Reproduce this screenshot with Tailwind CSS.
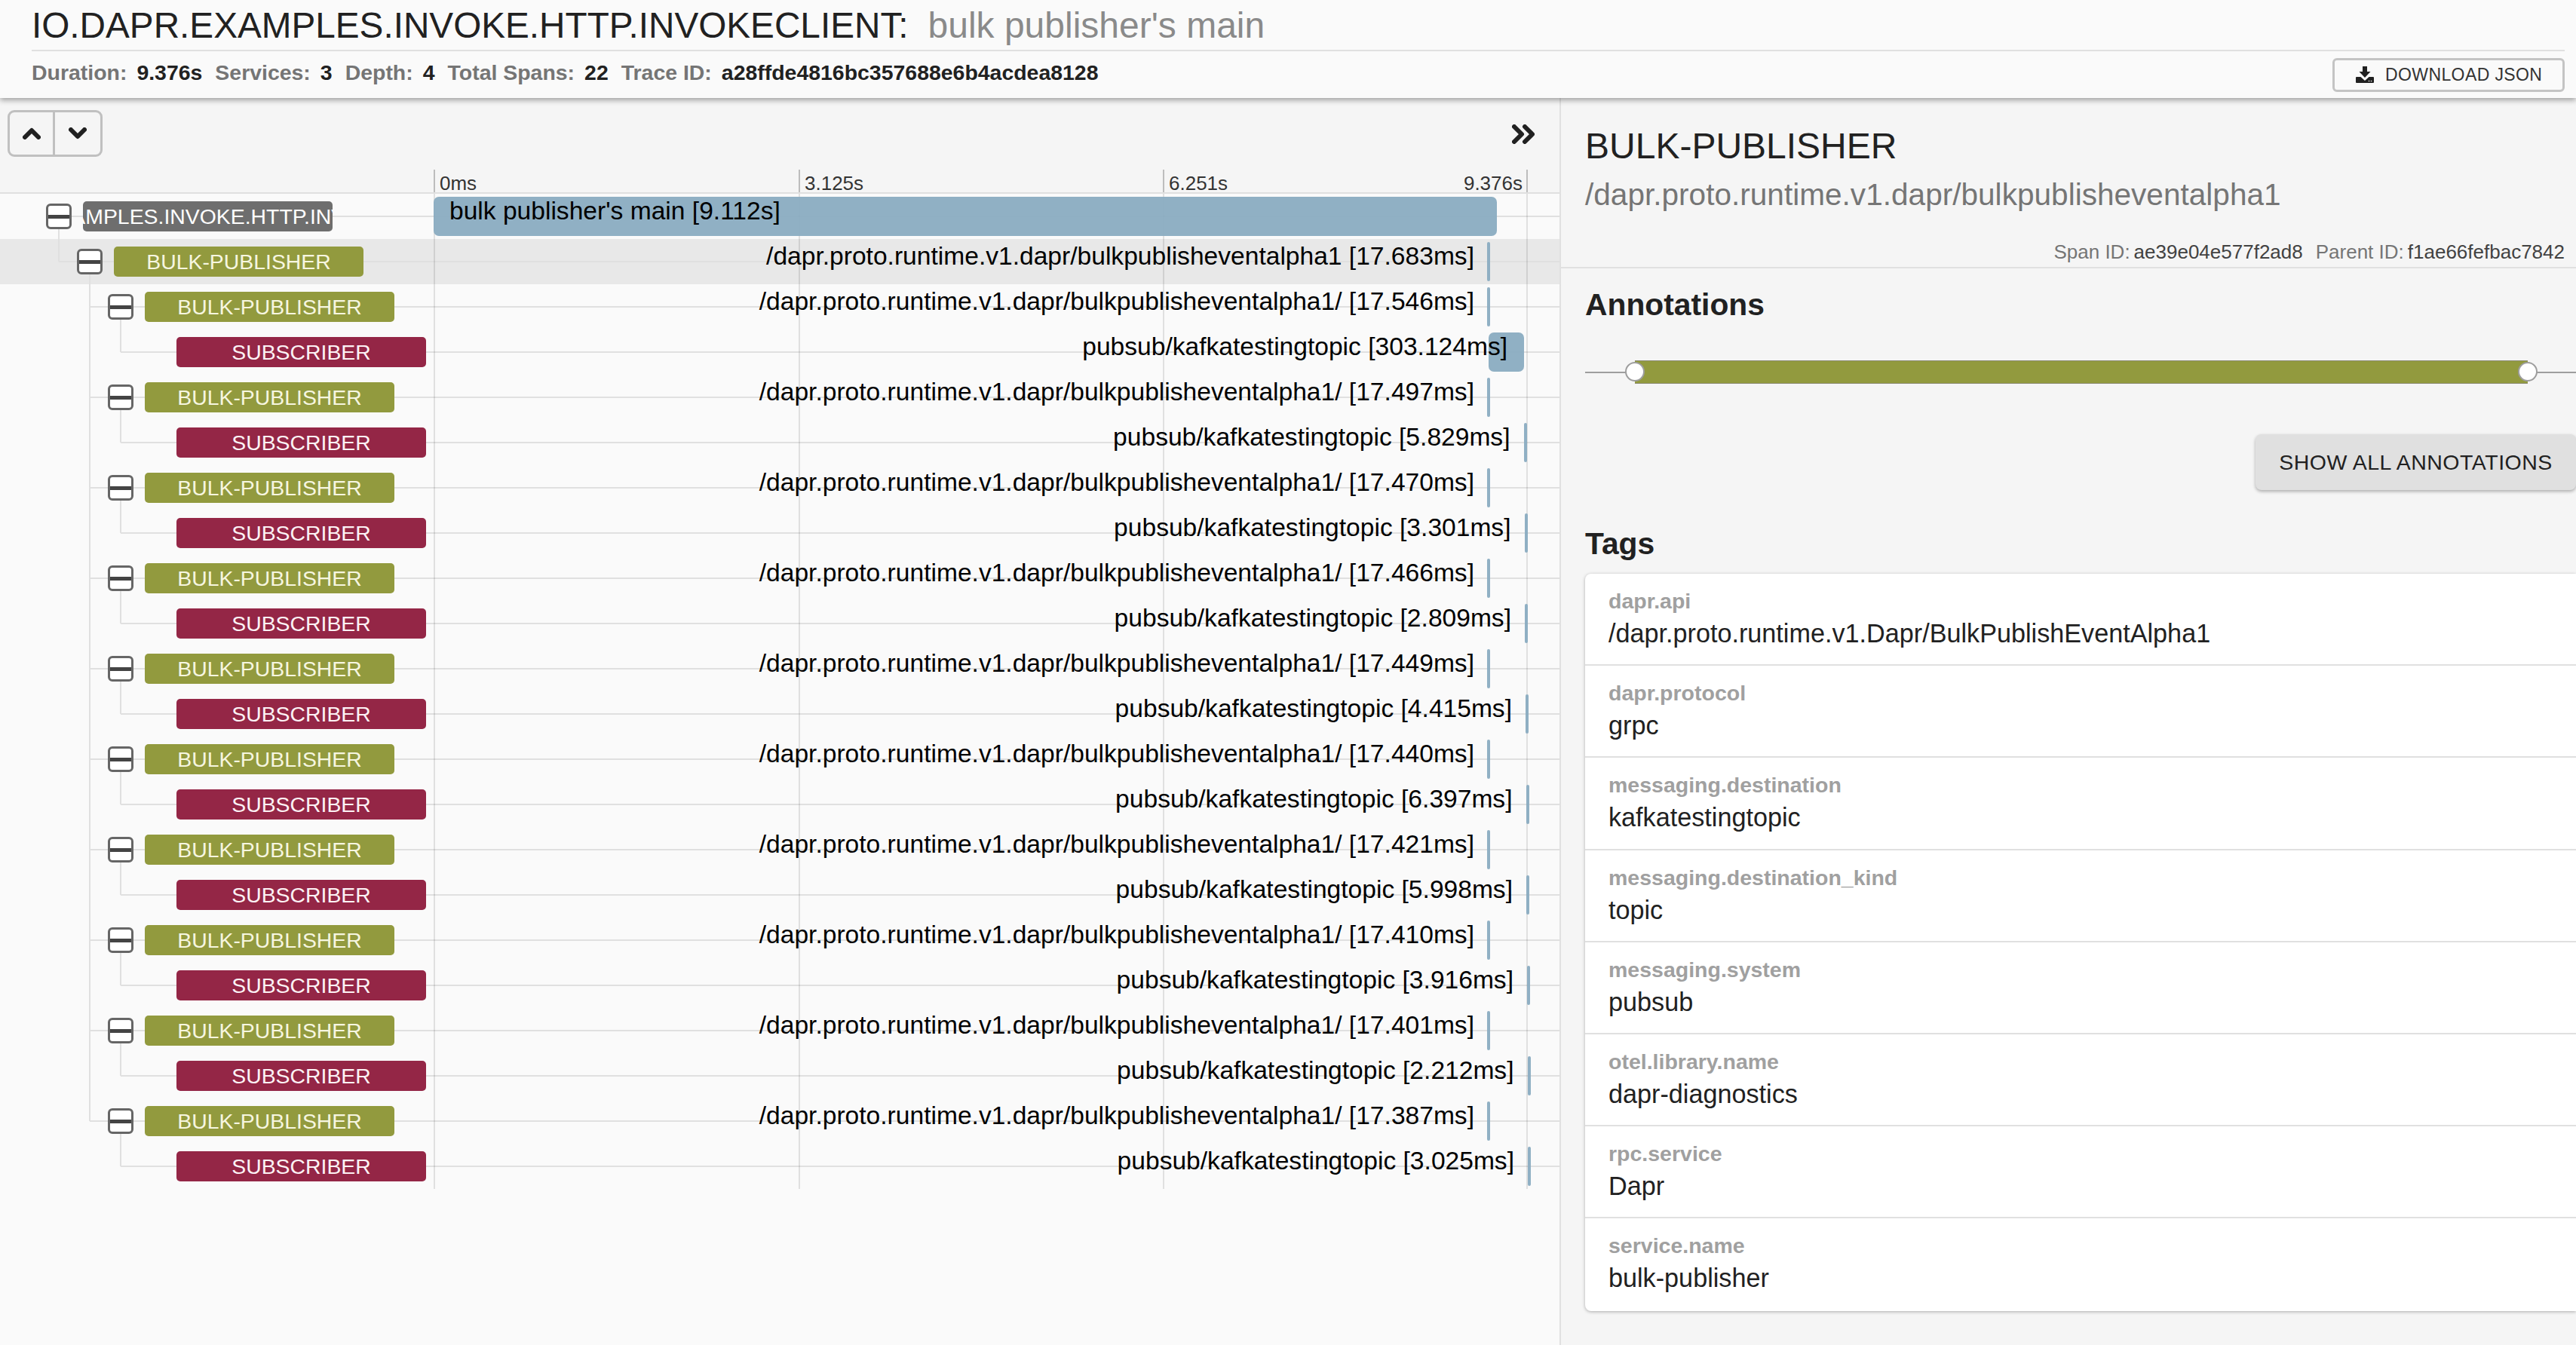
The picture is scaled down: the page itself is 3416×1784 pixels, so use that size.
<!DOCTYPE html>
<html lang="en">
<head>
    <meta charset="UTF-8">
    <meta name="viewport" content="width=device-width, initial-scale=1.0">
    <title>Trace detail</title>
    <script src="https://cdn.jsdelivr.net/npm/@tailwindcss/browser@4"></script>
</head>
<body class="bg-[#fafafa] font-['Liberation_Sans',Arial,sans-serif] text-black">
    <div class="w-[3416px] h-[1784px] flex flex-col overflow-hidden">
        <!-- header -->
        <header class="relative z-20 h-[130px] shrink-0 bg-[#fafafa] pl-[42px] pr-[15px] shadow-[0_3px_7px_rgba(0,0,0,0.35)]">
            <div class="h-[68px] border-b-2 border-[#e0e0e0] text-[47.700px] leading-[68px] whitespace-nowrap text-[#212121]">
                IO.DAPR.EXAMPLES.INVOKE.HTTP.INVOKECLIENT:<span class="text-[#8a8a8a] ml-[26px] text-[48px]">bulk publisher's main</span>
            </div>
            <div class="h-[62px] flex items-center justify-between">
                <div class="flex text-[28.450px] font-bold leading-[36px] pb-[6px] whitespace-nowrap">
                    <span class="text-[#757575]">Duration:</span><span class="ml-[13px] text-[#212121]">9.376s</span>
                    <span class="ml-[17px] text-[#757575]">Services:</span><span class="ml-[13px] text-[#212121]">3</span>
                    <span class="ml-[17px] text-[#757575]">Depth:</span><span class="ml-[13px] text-[#212121]">4</span>
                    <span class="ml-[17px] text-[#757575]">Total Spans:</span><span class="ml-[13px] text-[#212121]">22</span>
                    <span class="ml-[17px] text-[#757575]">Trace ID:</span><span class="ml-[13px] text-[#212121]">a28ffde4816bc357688e6b4acdea8128</span>
                </div>
                <button class="w-[308px] h-[45px] flex items-center border-[3px] border-[#c4c4c4] rounded-[6px] pl-[28px] text-[23px] tracking-[0.4px] text-[#333]">
                    <svg class="w-[24px] h-[22px] mr-[15px] shrink-0" viewBox="0 0 24 22" fill="#212121">
                        <path d="M9 0h6v7h4.500l-7.500 8-7.500-8H9z"/>
                        <path d="M1 14h5.500l5.500 5 5.500-5H23a1 1 0 0 1 1 1v6a1 1 0 0 1-1 1H1a1 1 0 0 1-1-1v-6a1 1 0 0 1 1-1z"/>
                        <circle cx="17.500" cy="19.500" r="0.800" fill="#fff"/>
                        <circle cx="20.500" cy="19.500" r="0.800" fill="#fff"/>
                    </svg>
                    DOWNLOAD JSON
                </button>
            </div>
        </header>

        <main class="flex flex-1 min-h-0">
            <!-- timeline -->
            <section class="w-[2070px] shrink-0 border-r-2 border-[#e0e0e0] flex flex-col">
                <div class="bg-[#f5f5f5]">
                    <div class="h-[95px] flex justify-between items-start pl-[10px] pr-[33px] pt-[16px]">
                        <div class="flex border-[3px] border-[#c0c0c0] rounded-[9px] h-[62px]">
                            <button class="w-[60px] flex items-center justify-center border-r-[3px] border-[#c0c0c0]">
                                <svg class="w-[24px] h-[16px]" viewBox="0 0 24 16" fill="none" stroke="#212121" stroke-width="6" stroke-linecap="round" stroke-linejoin="round"><path d="M3 13l9-9 9 9"/></svg>
                            </button>
                            <button class="w-[60px] flex items-center justify-center">
                                <svg class="w-[24px] h-[16px]" viewBox="0 0 24 16" fill="none" stroke="#212121" stroke-width="6" stroke-linecap="round" stroke-linejoin="round"><path d="M3 3l9 9 9-9"/></svg>
                            </button>
                        </div>
                        <svg class="w-[30px] h-[26px] mt-[19px]" viewBox="0 0 30 26" fill="none" stroke="#212121" stroke-width="6" stroke-linecap="round" stroke-linejoin="round"><path d="M3 3l10 10L3 23M17 3l10 10-10 10"/></svg>
                    </div>
                    <div class="h-[32px] pl-[575px] flex border-b-2 border-[#e0e0e0] text-[26px] leading-[36px] text-[#333]">
                        <div class="w-[484px] h-[30px] border-l-2 border-[#bdbdbd] pl-[6px]">0ms</div>
                        <div class="w-[483px] h-[30px] border-l-2 border-[#bdbdbd] pl-[6px]">3.125s</div>
                        <div class="w-[484px] h-[30px] border-r-2 border-l-2 border-[#bdbdbd] pl-[6px] pr-[5px] flex justify-between"><span>6.251s</span><span>9.376s</span></div>
                    </div>
                </div>
                <div id="rows" class="relative h-[1320px]"></div>
            </section>

            <!-- span detail -->
            <aside class="flex-1 min-w-0 bg-[#f5f5f5] flex flex-col">
                <div class="h-[226px] border-b-2 border-[#e0e0e0] pl-[32px] pr-[15px] pt-[36px] flex flex-col">
                    <h2 class="text-[48px] leading-[56px] text-[#212121]">BULK-PUBLISHER</h2>
                    <div class="mt-[12px] text-[40.600px] leading-[48px] text-[#757575] whitespace-nowrap">/dapr.proto.runtime.v1.dapr/bulkpublisheventalpha1</div>
                    <div class="mt-[36px] self-end flex text-[26px] leading-[32px] text-[#757575] whitespace-nowrap">
                        <span>Span ID:</span><span class="ml-[5px] text-[#424242]">ae39e04e577f2ad8</span>
                        <span class="ml-[17px]">Parent ID:</span><span class="ml-[5px] text-[#424242]">f1ae66fefbac7842</span>
                    </div>
                </div>
                <div class="flex flex-col pl-[32px]">
                    <h3 class="mt-[24px] text-[40.800px] font-bold leading-[48px] text-[#212121]">Annotations</h3>
                    <div class="mt-[50px] flex items-center h-[31px]">
                        <div class="w-[66px] h-[2px] bg-[#9e9e9e]"></div>
                        <div class="relative w-[1184px] h-[31px] bg-[#929a3e] border-y border-[#8a8a70]">
                            <span class="absolute left-[-13px] top-[1px] w-[26px] h-[26px] rounded-full bg-white border-2 border-[#9e9e9e]"></span>
                            <span class="absolute right-[-13px] top-[1px] w-[26px] h-[26px] rounded-full bg-white border-2 border-[#9e9e9e]"></span>
                        </div>
                        <div class="flex-1 h-[2px] bg-[#9e9e9e]"></div>
                    </div>
                    <button class="mt-[67px] self-end w-[425px] h-[74px] rounded-[8px] bg-[#e0e0e0] text-[28.500px] tracking-[0.5px] text-[#212121] shadow-[0_2px_4px_rgba(0,0,0,0.3)]">SHOW ALL ANNOTATIONS</button>
                    <h3 class="mt-[47px] text-[40.800px] font-bold leading-[48px] text-[#212121]">Tags</h3>
                    <div id="tags" class="mt-[16px] bg-white rounded-tl-[8px] rounded-bl-[8px] shadow-[0_1px_4px_rgba(0,0,0,0.3)]"></div>
                </div>
            </aside>
        </main>
    </div>

    <script>
        const ROW_H = 60;
        const depthPad = ['pl-[61px]', 'pl-[102px]', 'pl-[143px]', 'pl-[185px]'];
        const boxCenter = [78, 119, 160];
        const pillColor = {
            root: 'bg-[#6e6e6e]',
            bulk: 'bg-[#929a3e]',
            sub: 'bg-[#942646]',
        };
        const METHOD = '/dapr.proto.runtime.v1.dapr/bulkpublisheventalpha1';
        const TOPIC = 'pubsub/kafkatestingtopic';

        const spans = [
            { depth: 0, kind: 'root', name: 'IO.DAPR.EXAMPLES.INVOKE.HTTP.INVOKECLIENT', label: "bulk publisher's main [9.112s]", left: 575, width: 1410, textLeft: 596 },
            { depth: 1, kind: 'bulk', name: 'BULK-PUBLISHER', label: METHOD + ' [17.683ms]', left: 1972, width: 4, textRight: 1955 },
        ];
        const pairs = [
            ['17.546', '303.124', 1974, 47, 1999],
            ['17.497', '5.829', 2020.5, 4, 2002.5],
            ['17.470', '3.301', 2021.5, 4, 2003.5],
            ['17.466', '2.809', 2022, 4, 2004],
            ['17.449', '4.415', 2023, 4, 2005],
            ['17.440', '6.397', 2023.7, 4, 2005.5],
            ['17.421', '5.998', 2024.4, 4, 2006],
            ['17.410', '3.916', 2025, 4, 2007],
            ['17.401', '2.212', 2025.7, 4, 2007.5],
            ['17.387', '3.025', 2026, 4, 2008],
        ];
        pairs.forEach(([bulkMs, subMs, left, width, textRight]) => {
            spans.push({ depth: 2, kind: 'bulk', name: 'BULK-PUBLISHER', label: METHOD + '/ [' + bulkMs + 'ms]', left: 1972, width: 4, textRight: 1955 });
            spans.push({ depth: 3, kind: 'sub', name: 'SUBSCRIBER', label: TOPIC + ' [' + subMs + 'ms]', left, width, textRight });
        });

        function parentIndex(i) {
            const depth = spans[i].depth;
            for (let j = i - 1; j >= 0; j--) {
                if (spans[j].depth < depth) return j;
            }
            return -1;
        }

        let rowsHtml = '';
        spans.forEach((span, i) => {
            const parent = parentIndex(i);
            const lineX = parent >= 0 ? boxCenter[spans[parent].depth] : boxCenter[0];
            const thin = span.width < 10;
            const labelPos = span.textLeft
                ? `left:${span.textLeft}px`
                : `right:${2068 - span.textRight}px`;
            rowsHtml += `
                <div class="relative h-[60px] flex items-center ${depthPad[span.depth]} ${i === 1 ? 'bg-[#e8e8e8]' : ''}">
                    <div class="absolute right-0 top-[29px] h-[2px] bg-[#e0e0e0]" style="left:${lineX}px"></div>
                    ${parent >= 0 ? `<div class="absolute w-[2px] bg-[#e0e0e0]" style="left:${lineX - 1}px;top:${30 - (i - parent) * ROW_H}px;height:${(i - parent) * ROW_H}px"></div>` : ''}
                    ${span.kind === 'sub'
                        ? '<div class="w-[34px] h-[34px] mr-[15px] shrink-0"></div>'
                        : '<div class="relative z-10 w-[34px] h-[34px] mr-[15px] shrink-0 flex items-center border-[3px] border-[#666] rounded-[6px] bg-white"><div class="w-full h-[5px] bg-[#444]"></div></div>'}
                    <div class="relative z-10 w-[331px] h-[40px] shrink-0 rounded-[5px] overflow-hidden flex justify-center items-center whitespace-nowrap text-[28.400px] ${span.kind === 'root' ? 'text-white' : span.kind === 'bulk' ? 'text-[#f6f6e0]' : 'text-[#fdf2f5]'} ${pillColor[span.kind]}"><span class="shrink-0">${span.name}</span></div>
                    <div class="absolute z-[5] bg-[#8aacc1]/95 ${thin ? 'top-[4px] h-[52px] rounded-full' : 'top-[4px] h-[52px] rounded-[7px]'}" style="left:${span.left}px;width:${span.width}px"></div>
                    <div class="absolute z-10 top-[5px] leading-[36px] text-[33.600px] whitespace-nowrap" style="${labelPos}">${span.label}</div>
                </div>`;
        });
        rowsHtml += `
            <div class="absolute inset-0 pl-[575px] flex pointer-events-none">
                <div class="w-[484px] border-l-2 border-black/10"></div>
                <div class="w-[483px] border-l-2 border-black/10"></div>
                <div class="w-[484px] border-l-2 border-r-2 border-black/10"></div>
            </div>`;
        document.getElementById('rows').innerHTML = rowsHtml;

        const tags = [
            ['dapr.api', '/dapr.proto.runtime.v1.Dapr/BulkPublishEventAlpha1'],
            ['dapr.protocol', 'grpc'],
            ['messaging.destination', 'kafkatestingtopic'],
            ['messaging.destination_kind', 'topic'],
            ['messaging.system', 'pubsub'],
            ['otel.library.name', 'dapr-diagnostics'],
            ['rpc.service', 'Dapr'],
            ['service.name', 'bulk-publisher'],
        ];
        document.getElementById('tags').innerHTML = tags.map(([key, value], i) => `
            <div class="h-[122.200px] pl-[31px] pt-[20px] ${i < tags.length - 1 ? 'border-b-2 border-[#e0e0e0]' : ''}">
                <div class="text-[28.500px] font-bold leading-[32px] text-[#a0a0a0]">${key}</div>
                <div class="mt-[5px] text-[34.200px] leading-[44px] text-[#212121]">${value}</div>
            </div>
        `).join('');
    </script>
</body>
</html>
